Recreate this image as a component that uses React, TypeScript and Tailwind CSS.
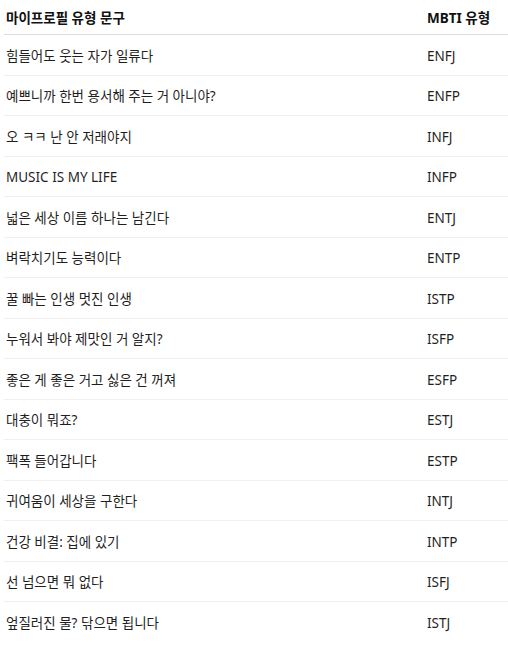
const rows: [string, string][] = [
  ["힘들어도 웃는 자가 일류다", "ENFJ"],
  ["예쁘니까 한번 용서해 주는 거 아니야?", "ENFP"],
  ["오 ㅋㅋ 난 안 저래야지", "INFJ"],
  ["MUSIC IS MY LIFE", "INFP"],
  ["넓은 세상 이름 하나는 남긴다", "ENTJ"],
  ["벼락치기도 능력이다", "ENTP"],
  ["꿀 빠는 인생 멋진 인생", "ISTP"],
  ["누워서 봐야 제맛인 거 알지?", "ISFP"],
  ["좋은 게 좋은 거고 싫은 건 꺼져", "ESFP"],
  ["대충이 뭐죠?", "ESTJ"],
  ["팩폭 들어갑니다", "ESTP"],
  ["귀여움이 세상을 구한다", "INTJ"],
  ["건강 비결: 집에 있기", "INTP"],
  ["선 넘으면 뭐 없다", "ISFJ"],
  ["엎질러진 물? 닦으면 됩니다", "ISTJ"],
];

export default function App() {
  return (
    <div className="min-h-screen bg-white pl-1 text-[13.5px] text-[#1f1f1f] font-['Noto_Sans','Noto_Sans_CJK_KR',sans-serif]">
      <div className="grid grid-cols-[423px_1fr] h-[35px] items-center border-b border-[#dcdcdc] font-bold text-[#111]">
        <div className="pl-[2px] pt-[2px]">마이프로필 유형 문구</div>
        <div className="pt-[2px]">MBTI 유형</div>
      </div>
      {rows.map(([phrase, type], i) => (
        <div
          key={type}
          className={`grid grid-cols-[423px_1fr] h-[40.5px] items-center pt-[2px] ${
            i < rows.length - 1 ? "border-b border-[#efefef]" : ""
          }`}
        >
          <div className="pl-[2px]">{phrase}</div>
          <div>{type}</div>
        </div>
      ))}
    </div>
  );
}
